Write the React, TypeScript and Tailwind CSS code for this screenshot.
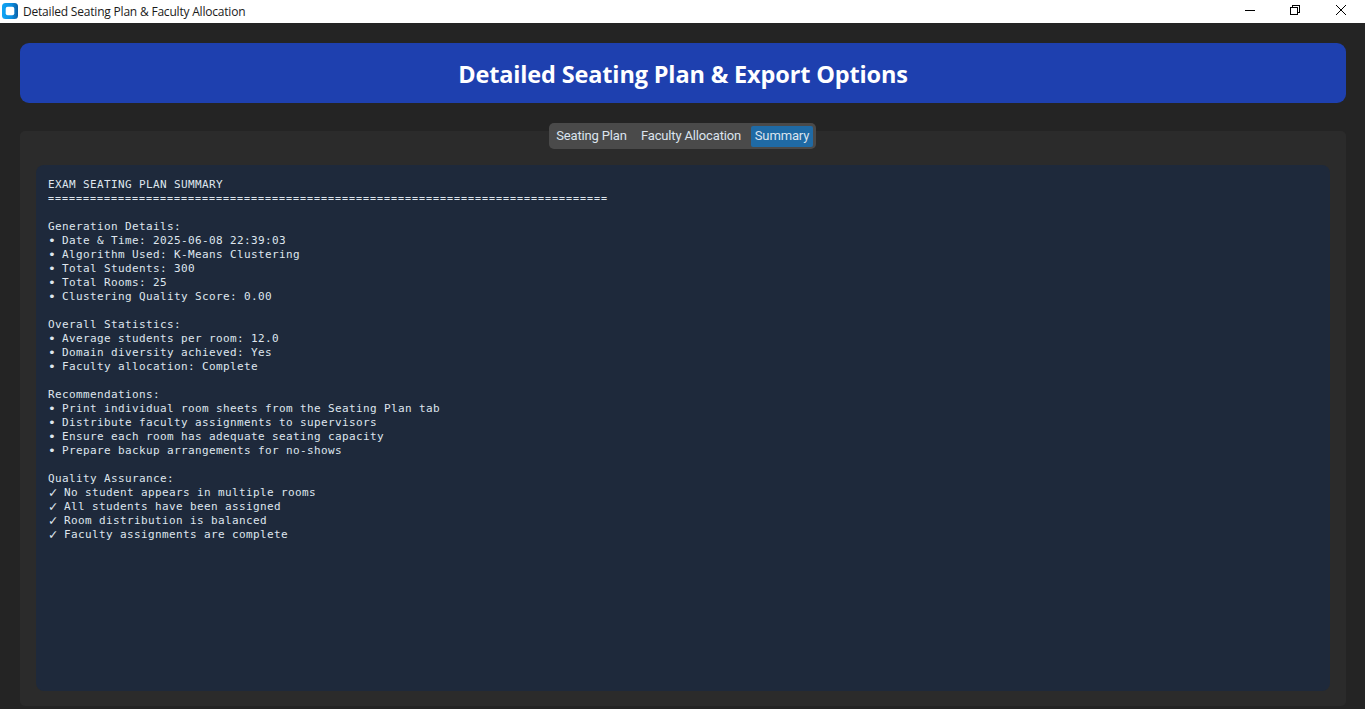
const sections: { title: string; mark: 'bullet' | 'check'; items: string[] }[] = [
  {
    title: 'Generation Details:',
    mark: 'bullet',
    items: [
      'Date & Time: 2025-06-08 22:39:03',
      'Algorithm Used: K-Means Clustering',
      'Total Students: 300',
      'Total Rooms: 25',
      'Clustering Quality Score: 0.00',
    ],
  },
  {
    title: 'Overall Statistics:',
    mark: 'bullet',
    items: ['Average students per room: 12.0', 'Domain diversity achieved: Yes', 'Faculty allocation: Complete'],
  },
  {
    title: 'Recommendations:',
    mark: 'bullet',
    items: [
      'Print individual room sheets from the Seating Plan tab',
      'Distribute faculty assignments to supervisors',
      'Ensure each room has adequate seating capacity',
      'Prepare backup arrangements for no-shows',
    ],
  },
  {
    title: 'Quality Assurance:',
    mark: 'check',
    items: [
      'No student appears in multiple rooms',
      'All students have been assigned',
      'Room distribution is balanced',
      'Faculty assignments are complete',
    ],
  },
];

function TitleBar() {
  return (
    <header className="flex h-[23px] shrink-0 items-center bg-white">
      <svg className="-mt-px ml-[2px] h-4 w-4 shrink-0" viewBox="0 0 16 16">
        <defs>
          <linearGradient id="logo" x1="0" y1="0" x2="1" y2="0">
            <stop offset="0" stopColor="#10a5f5" />
            <stop offset="0.6" stopColor="#0c8ee0" />
            <stop offset="1" stopColor="#0b5fa5" />
          </linearGradient>
        </defs>
        <rect width="16" height="16" rx="3.5" fill="url(#logo)" />
        <rect x="3.7" y="3.7" width="8.6" height="8.6" rx="2" fill="#fff" />
      </svg>
      <span className="ml-[5px] whitespace-nowrap font-['Open_Sans',sans-serif] text-[12px] leading-[23px] tracking-[-0.2px] text-[#1a1a1a]">
        Detailed Seating Plan &amp; Faculty Allocation
      </span>
      <div className="ml-auto flex h-[23px]">
        <svg className="h-[23px] w-[46px]" viewBox="0 0 46 23" shapeRendering="crispEdges">
          <path d="M18 10.5h10" stroke="#000" />
        </svg>
        <svg className="h-[23px] w-[46px]" viewBox="0 0 46 23" fill="none" stroke="#000" shapeRendering="crispEdges">
          <path d="M17.5 7.5h7v7h-7zM19.5 7.5v-2h7v7h-2" />
        </svg>
        <svg className="h-[23px] w-[46px]" viewBox="0 0 46 23" fill="none" stroke="#000">
          <path d="M17 5l10 10M27 5l-10 10" />
        </svg>
      </div>
    </header>
  );
}

function Tabs() {
  return (
    <nav className="z-10 mx-auto flex h-[26px] w-[267px] shrink-0 items-center rounded-[5px] bg-[#4a4a4a] font-[Roboto,sans-serif] text-[13px] tracking-[-0.15px] text-[#dce4ee]">
      <button className="ml-[3px] h-[21px] w-[79px] whitespace-nowrap">Seating Plan</button>
      <button className="ml-[3px] h-[21px] w-[114px] whitespace-nowrap">Faculty Allocation</button>
      <button className="ml-[3px] h-[21px] w-[62px] whitespace-nowrap rounded-[2px] bg-[#1f6aa5]">Summary</button>
    </nav>
  );
}

export default function App() {
  return (
    <div className="flex h-[709px] w-[1365px] flex-col overflow-hidden bg-[#242424]">
      <TitleBar />
      <h1 className="mt-5 mr-[19px] ml-5 flex h-[60px] shrink-0 items-center justify-center rounded-[9px] bg-[#1e40af] pt-1 font-['Open_Sans',sans-serif] text-[23.5px] font-bold tracking-[-0.15px] text-white">
        <span className="whitespace-nowrap">Detailed Seating Plan &amp; Export Options</span>
      </h1>
      <div className="mt-5 flex flex-col">
        <Tabs />
        <main className="-mt-[18px] mr-[19px] ml-5 h-[575px] rounded-[5px] bg-[#2b2b2b] px-4 pt-[34px]">
          <pre className="h-[526px] rounded-[8px] bg-[#1e293b] pt-[13px] pl-3 font-['DejaVu_Sans_Mono',monospace] text-[11px] leading-[14px] tracking-[0.378px] text-[#dfe6ee]">
            <div>EXAM SEATING PLAN SUMMARY</div>
            <div className="h-[14px] text-[10px] tracking-[0.98px]">{'='.repeat(80)}</div>
            {sections.map((section) => (
              <section key={section.title} className="mt-[14px]">
                <div>{section.title}</div>
                {section.items.map((item) => (
                  <div key={item} className="flex h-[14px]">
                    {section.mark === 'check' ? (
                      <span className="w-4 font-['DejaVu_Sans',sans-serif] text-[12.5px] leading-[13px]">✓</span>
                    ) : (
                      <span className="w-[14px] text-[13px] leading-[14px] tracking-normal">•</span>
                    )}
                    <span>{item}</span>
                  </div>
                ))}
              </section>
            ))}
          </pre>
        </main>
      </div>
    </div>
  );
}
